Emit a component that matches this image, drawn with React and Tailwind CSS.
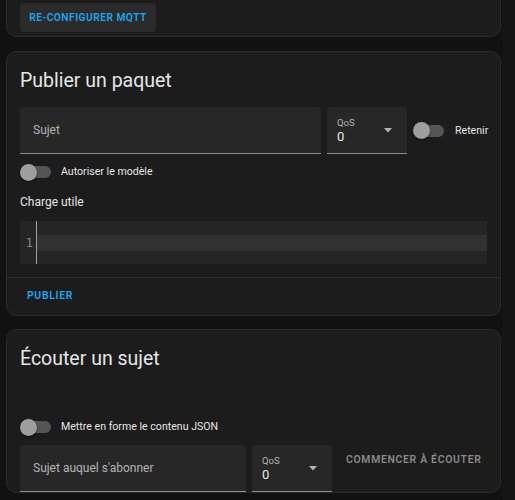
import React, { useState } from 'react';

const Toggle = ({ checked, onChange }) => (
    <button
        type="button"
        onClick={() => onChange(!checked)}
        className="relative flex h-[20px] w-[31px] shrink-0 items-center"
    >
        <span className={`ml-[1px] h-[12px] w-[30px] rounded-full ${checked ? 'bg-[#0d5a80]' : 'bg-[#555555]'}`} />
        <span
            className={`absolute top-[1.5px] h-[17px] w-[17px] rounded-full shadow-[0_1px_2px_rgba(0,0,0,0.5)] ${checked ? 'left-[14px] bg-[#03a9f4]' : 'left-0 bg-[#9e9e9e]'}`}
        />
    </button>
);

const TextField = ({ label, className = '' }) => (
    <div className={`flex h-[47px] min-w-0 items-center rounded-t-[4px] border-b border-[#8c8c8c] bg-[#272727] px-[13px] ${className}`}>
        <span className="whitespace-nowrap text-[12px] text-[#b4b4b4]">{label}</span>
    </div>
);

const QosSelect = () => (
    <div className="relative h-[47px] w-[80px] shrink-0 rounded-t-[4px] border-b border-[#8c8c8c] bg-[#272727] px-[10px]">
        <div className="pt-[10px] text-[9.6px] leading-[12px] text-[#b4b4b4]">QoS</div>
        <div className="text-[13px] leading-[16px] text-[#e8e8e8]">0</div>
        <svg className="absolute right-[15px] top-[21px]" width="8" height="5" viewBox="0 0 8 5">
            <path d="M0 0 L8 0 L4 4.5 Z" fill="#b4b4b4" />
        </svg>
    </div>
);

const Card = ({ className = '', children }) => (
    <div className={`rounded-[10px] border border-[#2a2a2a] bg-[#1c1c1c] ${className}`}>{children}</div>
);

const btnText = 'whitespace-nowrap text-[10.4px] font-semibold tracking-[0.7px]';

export default function App() {
    const [retain, setRetain] = useState(false);
    const [template, setTemplate] = useState(false);
    const [formatJson, setFormatJson] = useState(false);

    return (
        <div className="flex min-h-[500px] overflow-hidden bg-[#111111] font-['Roboto',sans-serif] text-[#e1e1e1]">
            <div className="min-w-0 flex-1 pl-[6px] pr-[1px]">
                {/* card du haut (coupé) */}
                <Card className="-mt-[20px] px-[13px] pb-[4px] pt-[22px]">
                    <button className="h-[29px] w-[136px] whitespace-nowrap rounded-[4px] bg-[#2b2b2b] text-[10.2px] font-semibold tracking-[0.5px] text-[#1ea7ef]">
                        RE-CONFIGURER MQTT
                    </button>
                </Card>

                {/* Publier un paquet */}
                <Card className="mt-[14px]">
                    <div className="px-[13px] pb-[13px] pt-[15px]">
                        <h2 className="text-[19.5px] leading-[27px] text-[#e6e6e6]">Publier un paquet</h2>
                        <div className="mt-[13px] flex items-center gap-[6px]">
                            <TextField label="Sujet" className="flex-1" />
                            <QosSelect />
                            <div className="flex w-[74px] shrink-0 items-center gap-[11px]">
                                <Toggle checked={retain} onChange={setRetain} />
                                <span className="whitespace-nowrap text-[10.6px] text-[#e6e6e6]">Retenir</span>
                            </div>
                        </div>
                        <div className="mt-[8px] flex h-[20px] items-center gap-[10px]">
                            <Toggle checked={template} onChange={setTemplate} />
                            <span className="text-[10.6px] text-[#e6e6e6]">Autoriser le modèle</span>
                        </div>
                        <div className="mt-[10px] text-[12px] leading-[20px] text-[#e6e6e6]">Charge utile</div>
                        <div className="mt-[9px] flex h-[43px] bg-[#252525] font-['DejaVu_Sans_Mono',monospace]">
                            <div className="flex w-[17px] items-center justify-end border-r border-[#a0a0a0] pr-[3px] text-[12px] text-[#8a8a8a]">
                                1
                            </div>
                            <div className="flex flex-1 items-center">
                                <div className="h-[16px] w-full bg-[#313131]" />
                            </div>
                        </div>
                    </div>
                    <div className="border-t border-[#2e2e2e] px-[12px] pb-[4px] pt-[3px]">
                        <button className={`h-[30px] px-[8px] text-[#1ea7ef] ${btnText}`}>PUBLIER</button>
                    </div>
                </Card>

                {/* Écouter un sujet */}
                <Card className="mt-[13px] px-[13px] pt-[15px]">
                    <h2 className="text-[19.5px] leading-[27px] text-[#e6e6e6]">Écouter un sujet</h2>
                    <div className="mt-[45px] flex h-[20px] items-center gap-[10px]">
                        <Toggle checked={formatJson} onChange={setFormatJson} />
                        <span className="text-[10.6px] text-[#e6e6e6]">Mettre en forme le contenu JSON</span>
                    </div>
                    <div className="mt-[8px] flex items-start gap-[6px]">
                        <TextField label="Sujet auquel s'abonner" className="w-[226px] shrink-0" />
                        <QosSelect />
                        <button className={`h-[30px] px-[8px] text-[#8a8a8a] ${btnText}`}>
                            COMMENCER À ÉCOUTER
                        </button>
                    </div>
                </Card>
            </div>
            <div className="w-[13px] shrink-0 bg-[#151515]" />
        </div>
    );
}
